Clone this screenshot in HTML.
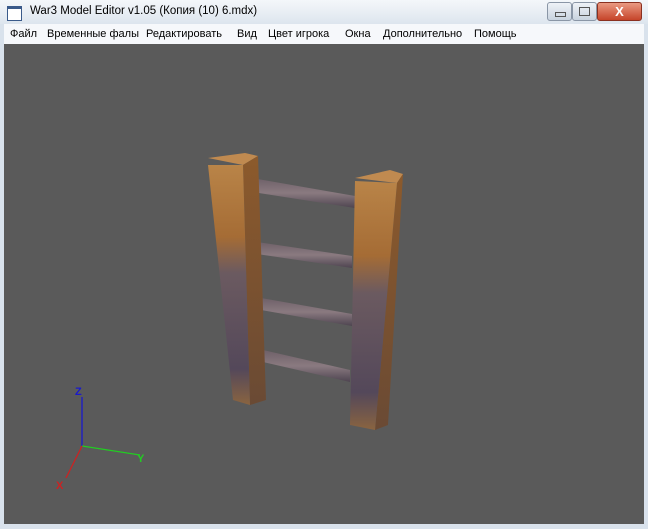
<!DOCTYPE html><html><head><style>
body{margin:0;width:648px;height:529px;overflow:hidden;background:#d9e2ec;font-family:"Liberation Sans",sans-serif;position:relative}
.title{position:absolute;left:0;top:0;width:648px;height:24px;background:linear-gradient(#f4f7fa,#dde5ee)}
.title span{position:absolute;left:30px;top:5px;font-size:11.5px;color:#000}
.ico{position:absolute;left:7px;top:6px;width:13px;height:11px;border:1px solid #3a5a8a;border-top-width:3px;background:#fff}
.menu{position:absolute;left:4px;top:24px;width:640px;height:20px;background:#f6f8fb;font-size:11px}
.menu span{position:absolute;top:4px}
.vp{position:absolute;left:4px;top:44px;width:640px;height:480px;background:#5a5a5a}
.btn{position:absolute;top:2px;height:17px;border:1px solid #8a96a6;border-radius:3px;background:linear-gradient(#eef2f7,#c9d3df)}
</style></head><body>
<div class="title"><div class="ico"></div><span>War3 Model Editor v1.05 (Копия (10) 6.mdx)</span>
<div class="btn" style="left:547px;width:23px"><div style="position:absolute;left:7px;top:9px;width:9px;height:3px;border:1px solid #555"></div></div>
<div class="btn" style="left:572px;width:23px"><div style="position:absolute;left:6px;top:4px;width:9px;height:7px;border:1px solid #555"></div></div>
<div class="btn" style="left:597px;width:43px;background:linear-gradient(#e99a82,#c6452a);border-color:#8a3020;color:#fff;font-weight:bold;text-align:center;font-size:13px;line-height:17px">X</div>
</div>
<div class="menu"><span style="left:6px">Файл</span><span style="left:43px">Временные фалы</span><span style="left:142px">Редактировать</span><span style="left:233px">Вид</span><span style="left:264px">Цвет игрока</span><span style="left:341px">Окна</span><span style="left:379px">Дополнительно</span><span style="left:470px">Помощь</span></div>
<div class="vp"></div>
<svg width="648" height="529" style="position:absolute;left:0;top:0">
<defs>
<linearGradient id="f" x1="0" x2="0" y1="0" y2="1"><stop offset="0" stop-color="#b98448"/><stop offset="0.3" stop-color="#a56c35"/><stop offset="0.45" stop-color="#6b5a60"/><stop offset="0.85" stop-color="#54485a"/><stop offset="1" stop-color="#8a6440"/></linearGradient>
<linearGradient id="s" x1="0" x2="0" y1="0" y2="1"><stop offset="0" stop-color="#8c5a2c"/><stop offset="1" stop-color="#6a4a34"/></linearGradient>
<linearGradient id="r" x1="0" x2="0" y1="0" y2="1"><stop offset="0" stop-color="#6e6068"/><stop offset="0.5" stop-color="#8a7a80"/><stop offset="1" stop-color="#4e4450"/></linearGradient>
</defs>
<polygon points="252,178 355,196 355,208 252,192" fill="url(#r)"/>
<polygon points="257,242 352,256 352,268 257,254" fill="url(#r)"/>
<polygon points="261,298 352,314 352,326 261,310" fill="url(#r)"/>
<polygon points="263,350 350,370 350,382 263,362" fill="url(#r)"/>
<polygon points="208,158 245,153 258,156 243,165" fill="#c08a50"/>
<polygon points="243,165 258,156 266,400 250,405" fill="url(#s)"/>
<polygon points="208,165 243,165 250,405 233,400" fill="url(#f)"/>
<polygon points="355,178 390,170 403,174 397,183" fill="#c08a50"/>
<polygon points="397,183 403,174 388,425 375,430" fill="url(#s)"/>
<polygon points="355,181 397,183 375,430 350,425" fill="url(#f)"/>
<line x1="82" y1="397" x2="82" y2="446" stroke="#1a1acc" stroke-width="1.3"/>
<line x1="82" y1="446" x2="140" y2="455" stroke="#22cc22" stroke-width="1.3"/>
<line x1="82" y1="446" x2="66" y2="478" stroke="#cc2222" stroke-width="1.3"/>
<text x="75" y="395" font-size="11" font-weight="bold" fill="#1a1acc" font-family="Liberation Sans">Z</text>
<text x="137" y="462" font-size="11" font-weight="bold" fill="#22cc22" font-family="Liberation Sans">Y</text>
<text x="56" y="489" font-size="11" font-weight="bold" fill="#cc2222" font-family="Liberation Sans">X</text>
</svg>
</body></html>
